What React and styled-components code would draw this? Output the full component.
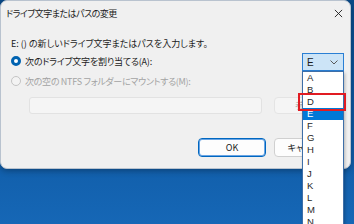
import React from "react";
import styled, { createGlobalStyle } from "styled-components";

const Global = createGlobalStyle`
  html, body { margin: 0; padding: 0; }
  body { width: 354px; height: 224px; overflow: hidden; }
  * { box-sizing: border-box; }
`;

const JP = `"Noto Sans CJK JP", "Noto Sans", sans-serif`;

const Desktop = styled.div`
  position: relative;
  width: 354px;
  height: 224px;
  background: linear-gradient(180deg, #0a4a88 0%, #0d57a0 45%, #1667b6 100%);
  font-family: ${JP};
  font-feature-settings: "palt";
  color: #1b1b1b;
  overflow: hidden;
`;

const Dialog = styled.div`
  width: 351px;
  height: 169px;
  background: #f0f0f0;
  border: 1px solid #b9c3cf;
  border-radius: 7px;
  display: flex;
  flex-direction: column;
  box-shadow: 0 2px 6px rgba(0, 0, 0, 0.3);
`;

const TitleBar = styled.div`
  height: 25px;
  display: flex;
  align-items: center;
  justify-content: space-between;
  padding: 0 6px 0 5px;
`;

const Text = styled.span`
  font-size: 9px;
  letter-spacing: ${(p) => p.$ls || 0}px;
  white-space: nowrap;
`;

const Close = styled.svg`
  width: 9px;
  height: 9px;
  margin-right: 1px;
`;

const Body = styled.div`
  display: flex;
  flex-direction: column;
  padding: 10px 8px 0 10px;
`;

const Prompt = styled.div`
  height: 15px;
  line-height: 15px;
  display: flex;
  align-items: center;
`;

const RadioRow = styled.label`
  display: flex;
  align-items: center;
  gap: 4px;
  height: 20px;
  color: ${(p) => (p.$disabled ? "#a3a3a3" : "#1b1b1b")};
`;

const RadioDot = styled.span`
  width: 10px;
  height: 10px;
  border-radius: 50%;
  flex: none;
  ${(p) =>
    p.$checked
      ? `background: #ffffff; border: 3px solid #0063b1;`
      : `border: 1px solid #c4c4c4; background: #f3f3f3;`}
`;

const FolderRow = styled.div`
  display: flex;
  align-items: center;
  gap: 12px;
  padding-left: 18px;
  margin-top: 6px;
  height: 17px;
`;

const TextField = styled.div`
  width: 235px;
  height: 17px;
  background: #f5f5f5;
  border: 1px solid #e2e2e2;
  border-radius: 3px;
`;

const Button = styled.div`
  width: ${(p) => p.$w || 68}px;
  height: ${(p) => p.$h || 19}px;
  flex: none;
  display: flex;
  align-items: center;
  justify-content: center;
  border-radius: 4px;
  background: ${(p) => (p.$disabled ? "#f5f5f5" : "#fdfdfd")};
  color: ${(p) => (p.$disabled ? "#a3a3a3" : "#1b1b1b")};
  border: 1px solid ${(p) => (p.$primary ? "#0067c0" : p.$disabled ? "#e4e4e4" : "#d0d0d0")};
  box-shadow: ${(p) => (p.$primary ? "inset 0 0 0 1px #6aa5e4" : "none")};
`;

const ButtonRow = styled.div`
  display: flex;
  justify-content: flex-end;
  gap: 8px;
  margin-top: 24px;
`;

const Combo = styled.div`
  position: absolute;
  left: 302px;
  top: 53px;
  width: 42px;
  height: 18px;
  background: #cce4f7;
  border: 1px solid #2a7fd4;
  display: flex;
  align-items: center;
  justify-content: space-between;
  padding: 0 5px 0 4px;
  font-family: "Liberation Sans", sans-serif;
  font-size: 10px;
  color: #1b1b1b;
`;

const List = styled.ul`
  position: absolute;
  left: 302px;
  top: 71px;
  width: 42px;
  height: 170px;
  margin: 0;
  padding: 0;
  list-style: none;
  background: #ffffff;
  border: 1px solid #3e6fa8;
  box-shadow: 1px 2px 3px rgba(0, 0, 0, 0.25);
  font-family: "Liberation Sans", sans-serif;
  font-size: 9.5px;
`;

const Item = styled.li`
  height: 12px;
  line-height: 12px;
  padding-left: 4px;
  background: ${(p) => (p.$selected ? "#0078d7" : "transparent")};
  color: ${(p) => (p.$selected ? "#ffffff" : "#262626")};
`;

const Mark = styled.div`
  position: absolute;
  left: 298px;
  top: 93px;
  width: 48px;
  height: 18px;
  border: 2px solid #e11b22;
`;

const letters = ["A", "B", "D", "E", "F", "G", "H", "I", "J", "K", "L", "M", "N", "O"];

export default function App() {
  return (
    <>
      <Global />
      <Desktop>
        <Dialog>
          <TitleBar>
            <Text $ls={-0.5}>ドライブ文字またはパスの変更</Text>
            <Close viewBox="0 0 10 10">
              <path d="M1 1 L9 9 M9 1 L1 9" stroke="#1b1b1b" strokeWidth="1" fill="none" />
            </Close>
          </TitleBar>
          <Body>
            <Prompt>
              <Text>E: () の新しいドライブ文字またはパスを入力します。</Text>
            </Prompt>
            <RadioRow>
              <RadioDot $checked />
              <Text $ls={-0.2}>次のドライブ文字を割り当てる(A):</Text>
            </RadioRow>
            <RadioRow $disabled>
              <RadioDot />
              <Text $ls={-0.3}>次の空の NTFS フォルダーにマウントする(M):</Text>
            </RadioRow>
            <FolderRow>
              <TextField />
              <Button $disabled $w={68} $h={17}>
                <Text>参照...</Text>
              </Button>
            </FolderRow>
            <ButtonRow>
              <Button $primary>
                <Text>OK</Text>
              </Button>
              <Button>
                <Text>キャンセル</Text>
              </Button>
            </ButtonRow>
          </Body>
        </Dialog>
        <Combo>
          <span>E</span>
          <svg width="8" height="5" viewBox="0 0 8 5">
            <path d="M0.5 0.5 L4 4 L7.5 0.5" stroke="#5a5a5a" strokeWidth="1" fill="none" />
          </svg>
        </Combo>
        <List>
          {letters.map((l) => (
            <Item key={l} $selected={l === "E"}>{l}</Item>
          ))}
        </List>
        <Mark />
      </Desktop>
    </>
  );
}
